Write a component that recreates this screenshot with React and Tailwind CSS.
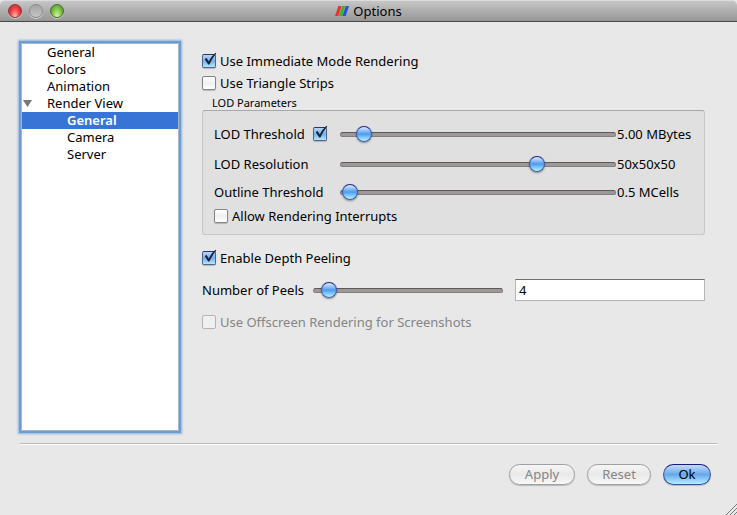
import { useId, useState } from 'react'
import clsx from 'clsx'

function Tick() {
  return (
    <svg className="pointer-events-none absolute bottom-0 left-0 h-4 w-4" viewBox="0 0 16 16" aria-hidden="true">
      <path d="M2.8 7.2 L4.4 5.8 L6.8 9.4 Q9.6 4 13.4 .8 L14.2 1.6 Q10.4 6.2 7.4 12.6 L6.2 12.6 Z" fill="#1a2236" />
    </svg>
  )
}

function Checkbox({ label, hideLabel, defaultChecked = false, disabled = false }) {
  const [checked, setChecked] = useState(defaultChecked)
  const id = useId()
  return (
    <span className="flex items-center gap-1">
      <span className="relative flex">
        <input
          id={id}
          type="checkbox"
          checked={checked}
          disabled={disabled}
          aria-label={hideLabel ? label : undefined}
          onChange={(e) => setChecked(e.target.checked)}
          className="h-3.5 w-3.5 appearance-none rounded-[2px] border border-[#858585] bg-linear-to-b from-white via-[#f0f0f0] to-white shadow-[0_1px_1px_#0003] checked:border-[#4c6590] checked:border-t-[#2c2f7c] checked:from-[#b9d6f4] checked:via-[#74b0ec] checked:to-[#b8e6fc] disabled:border-[#b4b4b4] disabled:from-[#f0f0f0] disabled:to-[#f0f0f0] disabled:shadow-none"
        />
        {checked && <Tick />}
      </span>
      {!hideLabel && (
        <label htmlFor={id} className={clsx(disabled && 'text-[#858585]')}>
          {label}
        </label>
      )}
    </span>
  )
}

function Slider({ id, label, defaultValue }) {
  return (
    <input
      id={id}
      type="range"
      min="0"
      max="100"
      step="any"
      aria-label={label}
      defaultValue={defaultValue}
      className="h-4 w-full min-w-0 appearance-none bg-transparent [&::-webkit-slider-runnable-track]:h-[5px] [&::-webkit-slider-runnable-track]:rounded-full [&::-webkit-slider-runnable-track]:border [&::-webkit-slider-runnable-track]:border-[#857e7d] [&::-webkit-slider-runnable-track]:border-t-[#5f5857] [&::-webkit-slider-runnable-track]:bg-[#9b9999] [&::-webkit-slider-thumb]:-mt-[7px] [&::-webkit-slider-thumb]:h-4 [&::-webkit-slider-thumb]:w-4 [&::-webkit-slider-thumb]:appearance-none [&::-webkit-slider-thumb]:rounded-full [&::-webkit-slider-thumb]:border [&::-webkit-slider-thumb]:border-[#3a5da8] [&::-webkit-slider-thumb]:border-t-[#1c2590] [&::-webkit-slider-thumb]:bg-linear-to-b [&::-webkit-slider-thumb]:from-[#dcebfb] [&::-webkit-slider-thumb]:via-[#4d9bee] [&::-webkit-slider-thumb]:to-[#b9f4ff] [&::-webkit-slider-thumb]:shadow-[0_1px_2px_#0006]"
    />
  )
}

function TreeItem({ label, nested, selected, onSelect }) {
  return (
    <button
      type="button"
      onClick={onSelect}
      className={clsx(
        'block h-[17px] w-full text-left leading-[17px]',
        nested ? 'pl-[45px]' : 'pl-[25px]',
        selected && 'bg-[#3874d6] font-semibold text-white',
      )}
    >
      {label}
    </button>
  )
}

function Sidebar() {
  const [selected, setSelected] = useState('render-general')
  const item = (key, label, nested) => (
    <TreeItem label={label} nested={nested} selected={selected === key} onSelect={() => setSelected(key)} />
  )
  return (
    <nav className="w-[158px] shrink-0 border border-[#a9b6c6] bg-white shadow-[0_0_0_2px_#6d9dd3,0_0_2px_3px_#8db3de]">
      <ul>
        <li>{item('general', 'General')}</li>
        <li>{item('colors', 'Colors')}</li>
        <li>{item('animation', 'Animation')}</li>
        <li>
          <div className="relative">
            {item('render', 'Render View')}
            <svg className="pointer-events-none absolute top-[5px] left-px h-[7px] w-[9px]" viewBox="0 0 9 7" aria-hidden="true">
              <path d="M0 0H9L4.5 7Z" fill="#757575" />
            </svg>
          </div>
          <ul>
            <li>{item('render-general', 'General', true)}</li>
            <li>{item('camera', 'Camera', true)}</li>
            <li>{item('server', 'Server', true)}</li>
          </ul>
        </li>
      </ul>
    </nav>
  )
}

function LodRow({ id, label, value, amount, children }) {
  return (
    <div className="grid h-7 grid-cols-[126px_1fr_77px] items-center">
      <div className="flex items-center gap-2">
        <label htmlFor={id}>{label}</label>
        {children}
      </div>
      <Slider id={id} defaultValue={value} />
      <output htmlFor={id} className="pl-px whitespace-nowrap">
        {amount}
      </output>
    </div>
  )
}

function TitleBar() {
  return (
    <header className="relative flex h-[22px] items-center justify-center gap-1 rounded-t-[5px] border-t border-b border-t-[#dcdcdc] border-b-[#484848] bg-linear-to-b from-[#c6c6c6] to-[#969696]">
      <div className="absolute top-[3px] left-2 flex gap-[7px]">
        <button type="button" aria-label="Close" className="h-3.5 w-3.5 rounded-full border border-[#8f3a3a] bg-radial-[at_50%_100%] from-[#ffc4bc] via-[#f2464a] to-[#b3161b] shadow-[0_1px_0_#ffffff80]" />
        <button type="button" aria-label="Minimize" disabled className="h-3.5 w-3.5 rounded-full border border-[#8c8c8c] bg-linear-to-b from-[#a4a4a4] to-[#c5c5c5] shadow-[0_1px_0_#ffffff80]" />
        <button type="button" aria-label="Zoom" className="h-3.5 w-3.5 rounded-full border border-[#44702c] bg-radial-[at_50%_100%] from-[#def8a4] via-[#86c950] to-[#3b8420] shadow-[0_1px_0_#ffffff80]" />
      </div>
      <svg className="h-[10px] w-[14px]" viewBox="0 0 14 10" aria-hidden="true">
        <path d="M3.4 0H6.6L3.2 10H0Z" fill="#ed3038" />
        <path d="M7.1 0H10.3L6.9 10H3.7Z" fill="#3fb51c" />
        <path d="M10.8 0H14L10.6 10H7.4Z" fill="#2450dc" />
      </svg>
      <h1>Options</h1>
    </header>
  )
}

const pill = 'h-[21px] rounded-full border pb-px shadow-[0_1px_1px_#0003]'
const plain = 'border-[#a0a0a0] bg-linear-to-b from-[#f6f6f6] via-[#e9e9e9] to-[#f8f8f8] text-[#858585]'

export default function App() {
  const peelsId = useId()
  return (
    <div className="relative flex min-h-screen flex-col bg-[#e8e8e8] font-['Noto_Sans','Lucida_Grande',sans-serif] text-[13px] leading-[18px] text-black">
      <TitleBar />
      <div className="flex flex-1 pt-[21px] pr-8 pb-3 pl-[21px]">
        <Sidebar />
        <main className="flex min-w-0 flex-1 flex-col pt-[9px] pl-[23px]">
          <div className="flex flex-col gap-1">
            <Checkbox label="Use Immediate Mode Rendering" defaultChecked />
            <Checkbox label="Use Triangle Strips" />
          </div>
          <section className="pt-1" aria-labelledby="lod-title">
            <h2 id="lod-title" className="pl-[10px] text-[11px] leading-[14px]">
              LOD Parameters
            </h2>
            <div className="rounded-[3px] border border-[#c6c6c6] border-t-[#a8a8a8] bg-[#e0e0e0] px-[11px] pt-[9px] pb-[9px]">
              <LodRow id="lod-threshold" label="LOD Threshold" value={6} amount="5.00 MBytes">
                <Checkbox label="Enable LOD threshold" hideLabel defaultChecked />
              </LodRow>
              <div className="pt-0.5 pb-px">
                <LodRow id="lod-resolution" label="LOD Resolution" value={73} amount="50x50x50" />
                <LodRow id="outline-threshold" label="Outline Threshold" value={0.5} amount="0.5 MCells" />
              </div>
              <Checkbox label="Allow Rendering Interrupts" />
            </div>
          </section>
          <div className="flex flex-col gap-3 pt-3.5">
            <Checkbox label="Enable Depth Peeling" defaultChecked />
            <div className="flex items-center gap-3">
              <div className="grid flex-1 grid-cols-[111px_1fr] items-center">
                <label htmlFor={peelsId}>Number of Peels</label>
                <Slider label="Number of Peels" defaultValue={4} />
              </div>
              <input
                id={peelsId}
                type="text"
                defaultValue="4"
                className="h-[22px] w-[190px] border border-[#b5b5b5] border-t-[#6f6f6f] bg-white px-[3px] outline-none"
              />
            </div>
            <Checkbox label="Use Offscreen Rendering for Screenshots" disabled />
          </div>
        </main>
      </div>
      <footer className="mr-5 ml-5 flex h-[72px] justify-end gap-3 border-t border-[#b9b9b9] pt-5 pr-1.5 shadow-[inset_0_1px_0_#fff]">
        <button type="button" disabled className={clsx(pill, plain, 'w-[66px]')}>
          Apply
        </button>
        <button type="button" disabled className={clsx(pill, plain, 'w-16')}>
          Reset
        </button>
        <button
          type="button"
          className={clsx(pill, 'w-12 border-[#34568f] border-t-[#1b1b7c] bg-linear-to-b from-[#c3dcf6] via-[#66a8ec] to-[#b8f0ff]')}
        >
          Ok
        </button>
      </footer>
      <svg className="absolute right-0 bottom-0 h-3 w-3" viewBox="0 0 12 12" stroke="#777" aria-hidden="true">
        <path d="M1 12L12 1M5 12L12 5M9 12L12 9" />
      </svg>
    </div>
  )
}
